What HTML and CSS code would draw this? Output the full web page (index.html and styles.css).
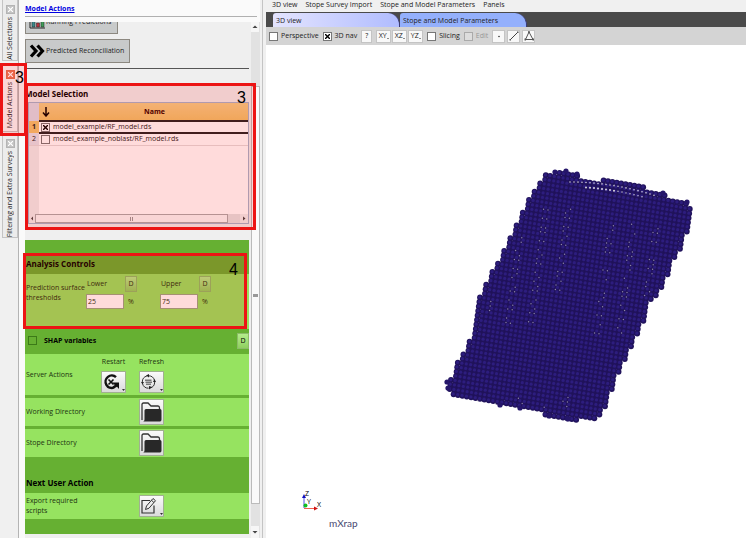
FILE: index.html
```html
<!DOCTYPE html>
<html lang="en">
<head>
    <meta charset="UTF-8">
    <title>mXrap</title>
    <link rel="stylesheet" href="styles.css">
</head>
<body>
    <!-- vertical dock tabs -->
    <nav class="dock-tabs">
        <div class="dock-tab">
            <button class="close" aria-label="Close All Selections"></button>
            <button class="dock-label">All Selections</button>
        </div>
        <div class="dock-tab active">
            <button class="close" aria-label="Close Model Actions"></button>
            <button class="dock-label">Model Actions</button>
        </div>
        <div class="dock-tab">
            <button class="close" aria-label="Close Filtering"></button>
            <button class="dock-label">Filtering and Extra Surveys</button>
        </div>
    </nav>

    <aside class="panel">
        <header class="panel-head"><a href="#actions">Model Actions</a></header>
        <div class="scroll" id="actions">
            <div class="content">
                <button class="action-btn action-short">
                    <svg width="16" height="14" viewBox="0 0 16 14"><path d="M1 0v13h15" fill="none" stroke="#222"/><path d="M3 6h3v6H3z" fill="#3c8a8a" stroke="#222" stroke-width=".5"/><path d="M7.500 8h3v4h-3z" fill="#b8323c" stroke="#222" stroke-width=".5"/><path d="M12 3h3v9h-3z" fill="#3f9c58" stroke="#222" stroke-width=".5"/></svg>
                    Running Predictions
                </button>
                <button class="action-btn">
                    <svg width="16" height="14" viewBox="0 0 16 14"><path d="M2 1.500 7 7l-5 5.500M8.500 1.500l5 5.500-5 5.500" fill="none" stroke="#000" stroke-width="3.200"/></svg>
                    Predicted Reconciliation
                </button>
                <hr>

                <section class="models">
                    <h2>Model Selection</h2>
                    <div class="table-box">
                        <table>
                            <thead>
                                <tr>
                                    <th class="num"></th>
                                    <th class="tick"><svg width="8" height="10" viewBox="0 0 8 10"><path d="M4 0v9M1 5.500 4 9l3-3.500" fill="none" stroke="#000" stroke-width="1.500"/></svg></th>
                                    <th class="name">Name</th>
                                </tr>
                            </thead>
                            <tbody>
                                <tr class="selected">
                                    <td class="num">1</td>
                                    <td class="tick"><input type="checkbox" id="m1" checked></td>
                                    <td><label for="m1">model_example/RF_model.rds</label></td>
                                </tr>
                                <tr>
                                    <td class="num">2</td>
                                    <td class="tick"><input type="checkbox" id="m2"></td>
                                    <td><label for="m2">model_example_noblast/RF_model.rds</label></td>
                                </tr>
                            </tbody>
                        </table>
                        <div class="filler"></div>
                        <div class="hbar">
                            <svg width="6" height="7" viewBox="0 0 6 7"><path d="M4 1.500v4L2 3.500z" fill="#444"/></svg>
                            <div class="hthumb"></div>
                            <div class="htrack"></div>
                            <svg width="8" height="7" viewBox="0 0 8 7"><path d="M3 1.500v4l2.500-2z" fill="#444"/></svg>
                        </div>
                    </div>
                </section>

                <section class="controls">
                    <h2 class="band band-top">Analysis Controls</h2>
                    <div class="row thresholds">
                        <span class="row-label">Prediction surface thresholds</span>
                        <div class="field">
                            <label for="lower">Lower</label><button class="d-btn">D</button>
                            <input type="text" id="lower" value="25"><span>%</span>
                        </div>
                        <div class="field">
                            <label for="upper">Upper</label><button class="d-btn">D</button>
                            <input type="text" id="upper" value="75"><span>%</span>
                        </div>
                    </div>
                    <div class="band shap">
                        <input type="checkbox" id="shap">
                        <label for="shap">SHAP variables</label>
                        <button class="d-btn">D</button>
                    </div>
                    <div class="row server">
                        <span class="row-label">Server Actions</span>
                        <div class="tool">
                            <span id="restart">Restart</span>
                            <button class="icon-btn" aria-labelledby="restart"><svg width="24" height="20" viewBox="0 1 24 20"><path d="M14 6.200A6.200 6.200 0 1 0 12 16.500" fill="none" stroke="#111" stroke-width="2.400"/><path d="M6.500 8.500l5 5M11.500 8.500l-5 5" stroke="#111" stroke-width="1.600"/><path d="M10 11.500h7v6.500l-2-2.200-3 1.700-1.500-2 2.300-1.500z" fill="#111"/><path d="M20 18h3l-1.500 2z" fill="#333"/></svg></button>
                        </div>
                        <div class="tool">
                            <span id="refresh">Refresh</span>
                            <button class="icon-btn" aria-labelledby="refresh"><svg width="24" height="20" viewBox="0 1 24 20"><circle cx="8.500" cy="11" r="6.200" fill="none" stroke="#333" stroke-dasharray="8 1.400"/><path d="M6 4.500l3-1.500v3.500zM12 16l-3 2.500V15zM1 11h3l-1.500 2.500zM13 11h3l-1.500-3z" fill="#222"/><path d="M5 8.500h6.500v1.500H5zM5.500 10.500H12V12H5.500zM6 12.500h5V14H6z" fill="#777"/><path d="M20 18h3l-1.500 2z" fill="#333"/></svg></button>
                        </div>
                    </div>
                    <div class="row folder">
                        <span class="row-label">Working Directory</span>
                        <button class="icon-btn" aria-label="Working Directory"><svg width="24" height="24" viewBox="0 0 24 24"><path d="M2 20V4.500Q2 3 3.500 3H8l3 3h7q1.500 0 1.500 2v2" fill="none" stroke="#333" stroke-width="1.300"/><path d="M4.500 10.500q0-1.500 1.500-1.500h14q1.500 0 1.500 1.500v9q0 2-1.500 2H3q1.500 0 1.500-2z" fill="#282828"/></svg></button>
                    </div>
                    <div class="row folder">
                        <span class="row-label">Stope Directory</span>
                        <button class="icon-btn" aria-label="Stope Directory"><svg width="24" height="24" viewBox="0 0 24 24"><path d="M2 20V4.500Q2 3 3.500 3H8l3 3h7q1.500 0 1.500 2v2" fill="none" stroke="#333" stroke-width="1.300"/><path d="M4.500 10.500q0-1.500 1.500-1.500h14q1.500 0 1.500 1.500v9q0 2-1.500 2H3q1.500 0 1.500-2z" fill="#282828"/></svg></button>
                    </div>
                    <h2 class="band band-next">Next User Action</h2>
                    <div class="row export">
                        <span class="row-label">Export required scripts</span>
                        <button class="icon-btn" aria-label="Export required scripts"><svg width="24" height="20" viewBox="0 1 24 20"><path d="M10 5.500H2v12.500h12v-7.500" fill="none" stroke="#333" stroke-width="1.200"/><path d="M5.500 14.500 6.500 11l6.500-7.500 2.500 2.200-6.500 7.500zM11.500 5.300l2.400 2.200" fill="#eee" stroke="#333"/><path d="M20 18h3l-1.500 2z" fill="#333"/></svg></button>
                    </div>
                    <div class="band band-end"></div>
                </section>
            </div>
            <div class="vbar">
                <svg width="8" height="10" viewBox="0 0 8 10"><path d="M1.500 6h5L4 3.500z" fill="#444"/></svg>
                <div class="vthumb"></div>
                <svg width="8" height="12" viewBox="0 0 8 12"><path d="M1.500 5h5L4 7.500z" fill="#444"/></svg>
            </div>
        </div>
    </aside>

    <main class="main">
        <nav class="menu">
            <a href="#view">3D view</a>
            <a href="#survey">Stope Survey Import</a>
            <a href="#params">Stope and Model Parameters</a>
            <a href="#panels">Panels</a>
        </nav>
        <div class="tabs">
            <button class="tab current">3D view</button>
            <button class="tab">Stope and Model Parameters</button>
        </div>
        <div class="toolbar">
            <label><input type="checkbox">Perspective</label>
            <label><input type="checkbox" checked>3D nav</label>
            <button class="tb tb-small">?</button>
            <div class="tb-group">
                <button class="tb drop">XY</button>
                <button class="tb drop">XZ</button>
                <button class="tb drop">YZ</button>
            </div>
            <label><input type="checkbox">Slicing</label>
            <label class="off"><input type="checkbox" disabled>Edit</label>
            <div class="tb-group draw">
                <button class="tb" aria-label="Point"><svg width="12" height="12" viewBox="0 0 12 12"><circle cx="6" cy="6.500" r=".8" fill="#333"/></svg></button>
                <button class="tb" aria-label="Line"><svg width="12" height="12" viewBox="0 0 12 12"><path d="M2.500 9.500l7-7" stroke="#444"/><path d="M1.500 9h1.500v1.500H1.500zM9 1.500h1.500V3H9z" fill="#555"/></svg></button>
                <button class="tb" aria-label="Polygon"><svg width="12" height="12" viewBox="0 0 12 12"><path d="M6 2 2.500 9.500H10z" fill="none" stroke="#555"/><path d="M5.200 1h1.500v2H5.200zM1.500 8.500H3v2H1.500zM9.500 8.500H11v2H9.500z" fill="#555"/></svg></button>
            </div>
        </div>
        <div class="viewport" id="view">
            <canvas class="cloud" id="cloud" width="260" height="264"></canvas>
            <svg class="axes" width="24" height="26" viewBox="0 0 24 26">
                <path d="M4 18V7" stroke="#5050e0"/><path d="M2 8l2-4 2 4z" fill="#1010c0"/>
                <path d="M4 18.500h11" stroke="#f06050"/><path d="M14 16.500l4 2-4 2z" fill="#d01010"/>
                <circle cx="5.500" cy="15.500" r="2" fill="#10c020"/>
                <text x="5" y="6">Z</text><text x="7" y="14">Y</text><text x="17" y="17">X</text>
            </svg>
            <span class="brand">mXrap</span>
        </div>
    </main>

    <!-- callouts -->
    <div class="callout callout-tab">3</div>
    <div class="callout callout-models">3</div>
    <div class="callout callout-analysis">4</div>

    <script src="cloud.js"></script>
</body>
</html>
```

FILE: styles.css
```css
* {
    box-sizing: border-box;
}

body {
    margin: 0;
    height: 100vh;
    display: flex;
    overflow: hidden;
    position: relative;
    background: #f0f0f0;
    color: #222;
    font: 7px/10px "Open Sans", "Noto Sans", sans-serif;
}

button, input {
    font: inherit;
    color: inherit;
    margin: 0;
    padding: 0;
}

button {
    border: 0;
    background: none;
}

a {
    color: inherit;
    text-decoration: none;
}

svg {
    display: block;
    flex: none;
}

h2 {
    margin: 0;
    font-size: 8px;
    line-height: 12px;
    font-weight: bold;
    color: #000;
}

input[type="checkbox"] {
    appearance: none;
    flex: none;
    width: 9px;
    height: 9px;
    border: 1px solid #777;
    background-color: #fff;
}

input[type="checkbox"]:checked {
    background-image:
        linear-gradient(45deg, transparent 38%, #000 42%, #000 58%, transparent 62%),
        linear-gradient(-45deg, transparent 38%, #000 42%, #000 58%, transparent 62%);
    background-size: 5px 5px;
    background-position: center;
    background-repeat: no-repeat;
}

/* dock tabs */
.dock-tabs {
    width: 18px;
    padding-left: 2px;
    display: flex;
    flex-direction: column;
    align-items: stretch;
    gap: 2px;
}

.dock-tab {
    display: flex;
    flex-direction: column;
    align-items: center;
    gap: 3px;
    padding: 5px 0 0;
    background: #ececec;
    border: 1px solid #c4c4c4;
    border-top: 0;
}

.dock-tab.active {
    background: #fafafa;
    padding: 7px 0 3px;
}

.dock-label {
    writing-mode: vertical-rl;
    transform: rotate(180deg);
    line-height: 12px;
    white-space: nowrap;
}

.close {
    width: 9px;
    height: 9px;
    border: 1px solid #b4b4b4;
    background:
        linear-gradient(45deg, transparent 38%, #fff 44%, #fff 56%, transparent 62%) center / 5px 5px no-repeat,
        linear-gradient(-45deg, transparent 38%, #fff 44%, #fff 56%, transparent 62%) center / 5px 5px no-repeat;
    background-color: #c4c4c4;
}

.active .close {
    border-color: #e07050;
    background-color: #e87858;
}

/* left panel */
.panel {
    width: 242px;
    padding-left: 6px;
    display: flex;
    flex-direction: column;
    border-left: 1px solid #b4b4b4;
    background: #fafafa;
}

.panel-head {
    height: 17px;
    margin: 0 3px 5px 0;
    padding-top: 4px;
    border-bottom: 1px solid #b0b0b0;
    font-size: 7px;
    font-weight: bold;
}

.panel-head a {
    color: #0000e0;
    text-decoration: underline;
}

.scroll {
    flex: 1;
    min-height: 0;
    display: flex;
    overflow: hidden;
    background: #efefef;
}

.content {
    flex: 1;
    min-width: 0;
    margin-top: -12px;
    padding-right: 2px;
}

.action-btn {
    width: 105px;
    height: 24px;
    margin-bottom: 5px;
    padding-left: 3px;
    display: flex;
    align-items: center;
    gap: 1px;
    border: 1px solid #8c8880;
    background: #c8caca;
    white-space: nowrap;
}

.action-short {
    width: 93px;
}

hr {
    margin: 0 0 19px;
    border: 0;
    border-top: 1px solid #555;
}

.models {
    margin-bottom: 16px;
}

.models h2 {
    margin-bottom: 2px;
}

.table-box {
    margin-left: 3px;
    height: 122px;
    display: flex;
    flex-direction: column;
    border: 1px solid #a4b4cc;
    background: #fff;
}

table {
    width: 100%;
    table-layout: fixed;
    border-collapse: collapse;
}

th, td {
    height: 12px;
    padding: 0;
}

th {
    height: 18px;
    font-weight: bold;
    color: #300;
    background: linear-gradient(#f2cf88, #efc26a);
}

td {
    border-bottom: 1px solid #e4dcdc;
}

.num {
    width: 10px;
    text-align: center;
    background: #e4e4ec;
}

th.num {
    background: #dcdce8;
}

.tick {
    width: 14px;
}

.name {
    padding-left: 8px;
}

.tick input {
    display: block;
    margin-left: 2px;
}

.tick svg {
    margin: 0 auto;
}

.selected td {
    border-top: 2px solid #222;
    border-bottom: 2px solid #222;
}

.selected .num {
    border: 0;
    background: #f0c470;
    font-weight: bold;
}

.filler {
    flex: 1;
    border-left: 10px solid #efefef;
}

.hbar {
    height: 9px;
    display: flex;
    align-items: center;
    background: #efefef;
}

.hthumb {
    flex: 1;
    height: 9px;
    border: 1px solid #aaa;
    background: linear-gradient(90deg, #999 1px, transparent 1px, transparent 2px, #999 2px, #999 3px, transparent 3px) center / 4px 4px no-repeat #f8f8f8;
}

.htrack {
    width: 12px;
    height: 9px;
    background: #e4e4e4;
}

/* green form */
.controls {
    color: #1c3310;
    background: #66b032;
}

.band {
    padding-left: 1px;
}

.band-top {
    height: 34px;
    padding-top: 18px;
}

.row {
    display: grid;
    grid-template-columns: 75px 38px 38px;
    align-items: center;
    padding-left: 1px;
    background: #96e360;
}

.row-label {
    max-width: 60px;
}

.thresholds {
    grid-template-columns: 60px 74px 74px;
    height: 55px;
    padding-bottom: 18px;
}

.field {
    display: grid;
    grid-template-columns: 38px 12px;
    gap: 2px 1px;
    align-items: center;
}

.field input {
    width: 38px;
    height: 15px;
    padding-left: 1px;
    border: 1px solid #98a888;
    background: #fff;
}

.field label {
    padding-left: 1px;
}

.field span {
    padding-left: 3px;
}

.d-btn {
    width: 12px;
    height: 16px;
    border: 1px solid #8cbc68;
    background: linear-gradient(#b4ec8c, #90d060);
}

.shap {
    height: 25px;
    padding: 0 0 2px 3px;
    display: flex;
    align-items: center;
    gap: 7px;
    font-weight: bold;
    color: #000;
}

.shap input[type="checkbox"] {
    background: none;
    border-color: #3c7a18;
}

.shap .d-btn {
    margin-left: auto;
    font-weight: normal;
}

.server {
    height: 41px;
    margin-bottom: 3px;
}

.tool {
    width: 25px;
    display: flex;
    flex-direction: column;
    align-items: center;
    gap: 4px;
}

.folder {
    height: 28px;
}

.folder + .folder {
    margin-top: 3px;
}

.folder .row-label {
    max-width: none;
}

.folder .icon-btn, .export .icon-btn {
    grid-column: 3;
}

.icon-btn {
    width: 25px;
    border: 1px solid #a0b090;
    background: linear-gradient(#fafafa, #dadada);
    overflow: hidden;
}

.band-next {
    height: 36px;
    padding-top: 20px;
}

.export {
    height: 26px;
}

.export .row-label {
    max-width: 54px;
}

.band-end {
    height: 15px;
}

.vbar {
    width: 9px;
    display: flex;
    flex-direction: column;
    background: #e2e2e2;
}

.vbar svg {
    background: #f6f6f6;
}

.vthumb {
    flex: 1;
    margin: 54px 0 22px;
    border: 1px solid #bbb;
    background: linear-gradient(#999, #999) center / 5px 3px no-repeat #fafafa;
}

/* 3D window */
.main {
    flex: 1;
    min-width: 0;
    margin-left: 2px;
    padding-left: 3px;
    display: flex;
    flex-direction: column;
    border-left: 1px solid #c4c4c4;
}

.menu {
    height: 12px;
    padding: 0 6px;
    display: flex;
    gap: 8px;
    line-height: 9px;
}

.tabs {
    height: 15px;
    padding-left: 7px;
    display: flex;
    background: #4a4a4a;
}

.tab {
    width: 127px;
    margin-top: 1px;
    padding: 1px 0 0 3px;
    text-align: left;
    border-radius: 3px 12px 0 0;
    background: #94b0fc;
    border-right: 1px solid #3c3c78;
}

.tab.current {
    background: linear-gradient(90deg, #e4e4fe, #b0bcfe);
}

.toolbar {
    height: 18px;
    padding-left: 3px;
    display: flex;
    align-items: center;
    gap: 4px;
    background: #d4d4d4;
}

.toolbar label {
    display: flex;
    align-items: center;
    gap: 3px;
}

.off {
    color: #999;
}

.off input[type="checkbox"] {
    border-color: #aaa;
    background: #ddd;
}

.tb {
    width: 15px;
    height: 13px;
    display: flex;
    align-items: center;
    justify-content: center;
    border: 1px solid #c4c4c4;
    background: #f8f8f8;
}

.tb-small {
    width: 11px;
}

.drop::after {
    content: "";
    align-self: flex-end;
    margin-bottom: 2px;
    border: 1px solid transparent;
    border-top-color: #222;
}

.tb-group {
    display: flex;
    gap: 1px;
}

.draw {
    gap: 2px;
}

.draw .tb {
    width: 13px;
}

.viewport {
    flex: 1;
    min-height: 0;
    position: relative;
    overflow: hidden;
    background: #fff;
}

.cloud {
    position: absolute;
    left: 174px;
    top: 120px;
}

.axes {
    position: absolute;
    left: 34px;
    bottom: 22px;
    font-size: 7px;
}

.brand {
    position: absolute;
    left: 63px;
    bottom: 9px;
    font: 10px/12px Lato, sans-serif;
    color: #484870;
}

/* callouts */
.callout {
    position: absolute;
    border: 3px solid #ec1414;
    background: rgba(255, 0, 0, 0.14);
    color: #000;
    font: 16px/16px "Liberation Sans", sans-serif;
    text-align: right;
    pointer-events: none;
}

.callout-tab {
    left: 0;
    top: 63px;
    width: 27px;
    height: 73px;
    padding-top: 4px;
}

.callout-models {
    left: 25px;
    top: 83px;
    width: 231px;
    height: 147px;
    padding: 4px 7px;
}

.callout-analysis {
    left: 23px;
    top: 253px;
    width: 224px;
    height: 76px;
    padding: 6px;
}
```

FILE: cloud.js
```javascript
const canvas = document.getElementById('cloud');
const ctx = canvas.getContext('2d');

// window position of the canvas origin, outline points use the same space
const ox = 440;
const oy = 165;

const outline = [
    [545, 175], [548, 172], [556, 173], [566, 171], [570, 174], [577, 174], [580, 178],
    [600, 180], [620, 181], [640, 185], [652, 190], [655, 194], [663, 193], [670, 198],
    [680, 202], [687, 202], [688, 207], [692, 210], [692, 222], [689, 232], [683, 237],
    [680, 250], [674, 261], [669, 271], [664, 285], [659, 293], [651, 301], [645, 319],
    [636, 337], [629, 352], [621, 370], [616, 377], [612, 390], [606, 406], [602, 413],
    [592, 421], [578, 420], [567, 419], [552, 417], [540, 413], [520, 408], [503, 404],
    [499, 406], [478, 401], [454, 397], [447, 391], [448, 382], [453, 378], [457, 363],
    [460, 360], [467, 345], [476, 327], [477, 316], [477, 303], [484, 290], [488, 279],
    [496, 265], [506, 247], [513, 232], [518, 222], [529, 200], [536, 186]
];

const shape = new Path2D();
outline.forEach(([x, y], i) => i ? shape.lineTo(x - ox, y - oy) : shape.moveTo(x - ox, y - oy));
shape.closePath();

function dot(x, y, r, color) {
    ctx.fillStyle = color;
    ctx.beginPath();
    ctx.arc(x, y, r, 0, Math.PI * 2);
    ctx.fill();
}

const points = [];
for (let j = -10; j < 80; j++) {
    for (let i = -20; i < 90; i++) {
        const x = i * 4.4 - j * 0.6;
        const y = i * 0.75 + j * 4.5 - 40;
        if (ctx.isPointInPath(shape, x, y)) points.push([x, y, i, j]);
    }
}

// solid core, trimmed so that the dots alone make the edge
ctx.fillStyle = '#21135c';
ctx.fill(shape);
ctx.globalCompositeOperation = 'destination-out';
ctx.lineWidth = 8;
ctx.stroke(shape);
ctx.globalCompositeOperation = 'source-over';

points.forEach(([x, y]) => dot(x, y, 2.9, '#21135c'));
points.forEach(([x, y]) => dot(x - 0.3, y - 0.3, 1.6, '#2d1d7e'));

// loose dots on the rim
[[577, 174], [663, 193], [448, 388], [500, 405], [520, 408], [549, 416], [568, 419],
 [566, 171], [555, 172], [687, 202], [447, 382]].forEach(([x, y]) => dot(x - ox, y - oy, 2.6, '#25166a'));

// gaps where the surface is thin
const thin = [
    [500, 205, 575, 290, 4], [485, 285, 540, 322, 4], [600, 220, 665, 295, 5],
    [580, 290, 640, 335, 6], [460, 390, 570, 412, 9]
];
points.forEach(([x, y, i, j]) => {
    const px = x + ox, py = y + oy;
    const h = (i * 37 + j * 61 + i * j * 7) % 23;
    const inside = ctx.isPointInPath(shape, x - 8, y) && ctx.isPointInPath(shape, x + 8, y);
    const hit = inside && thin.some(([x1, y1, x2, y2, n]) =>
        px > x1 && px < x2 && py > y1 && py < y2 && i % 5 < 2 && Math.abs(h) % n < 2);
    if (hit) dot(x + 2, y + 2.5, 0.7, '#8c84a4');
});

// open rows along the top edge
for (let k = 0; k < 22; k++) {
    const x = 570 + k * 4 - ox;
    const y = 180 + k * k * 0.03 - oy;
    dot(x, y + 2, 0.8, '#c8c4d4');
    if (k > 3 && k < 19) dot(x, y + 7, k < 12 ? 1 : 0.7, '#d8d4e0');
}
```
